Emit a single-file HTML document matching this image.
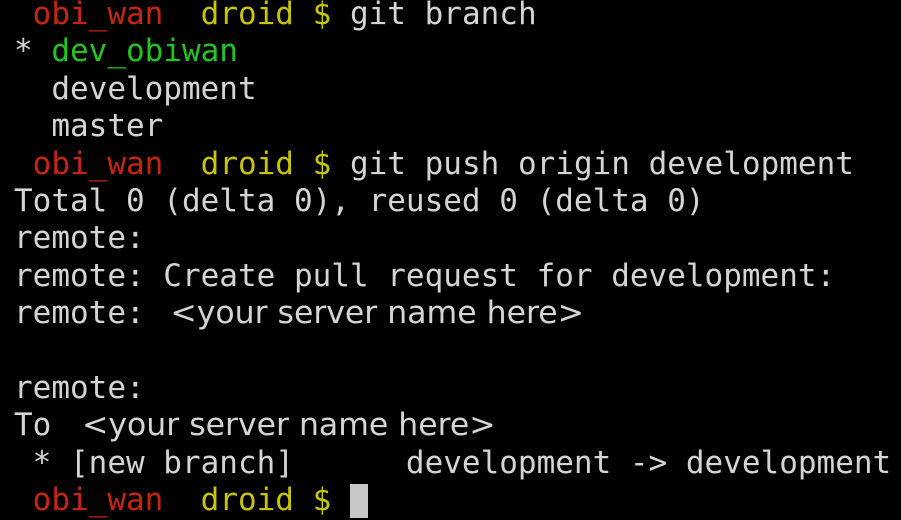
<!DOCTYPE html>
<html><head><meta charset="utf-8"><style>
html,body{margin:0;padding:0;background:#000;}
body{width:901px;height:518px;overflow:hidden;position:relative;}
pre{position:absolute;left:14px;top:-4px;margin:0;font-family:"DejaVu Sans Mono","Liberation Mono",monospace;font-size:31px;line-height:37.4px;color:#d4d4d4;white-space:pre;}
.r{color:#c8250f}.y{color:#c8c400}.g{color:#22c422}
.s{font-family:"DejaVu Sans","Liberation Sans",sans-serif;font-size:31.5px;line-height:30px;}
.cur{display:inline-block;width:18px;height:34px;background:#c8c8c8;vertical-align:-8px;}
</style></head><body>
<pre> <span class="r">obi_wan</span>  <span class="y">droid $</span> git branch
* <span class="g">dev_obiwan</span>
  development
  master
 <span class="r">obi_wan</span>  <span class="y">droid $</span> git push origin development
Total 0 (delta 0), reused 0 (delta 0)
remote:
remote: Create pull request for development:
remote: <span class="s" style="margin-left:7px">&lt;your server name here&gt;</span>

remote:
To <span class="s" style="margin-left:12px">&lt;your server name here&gt;</span>
 * [new branch]      development -&gt; development
 <span class="r">obi_wan</span>  <span class="y">droid $</span> <span class="cur"></span></pre>
</body></html>
